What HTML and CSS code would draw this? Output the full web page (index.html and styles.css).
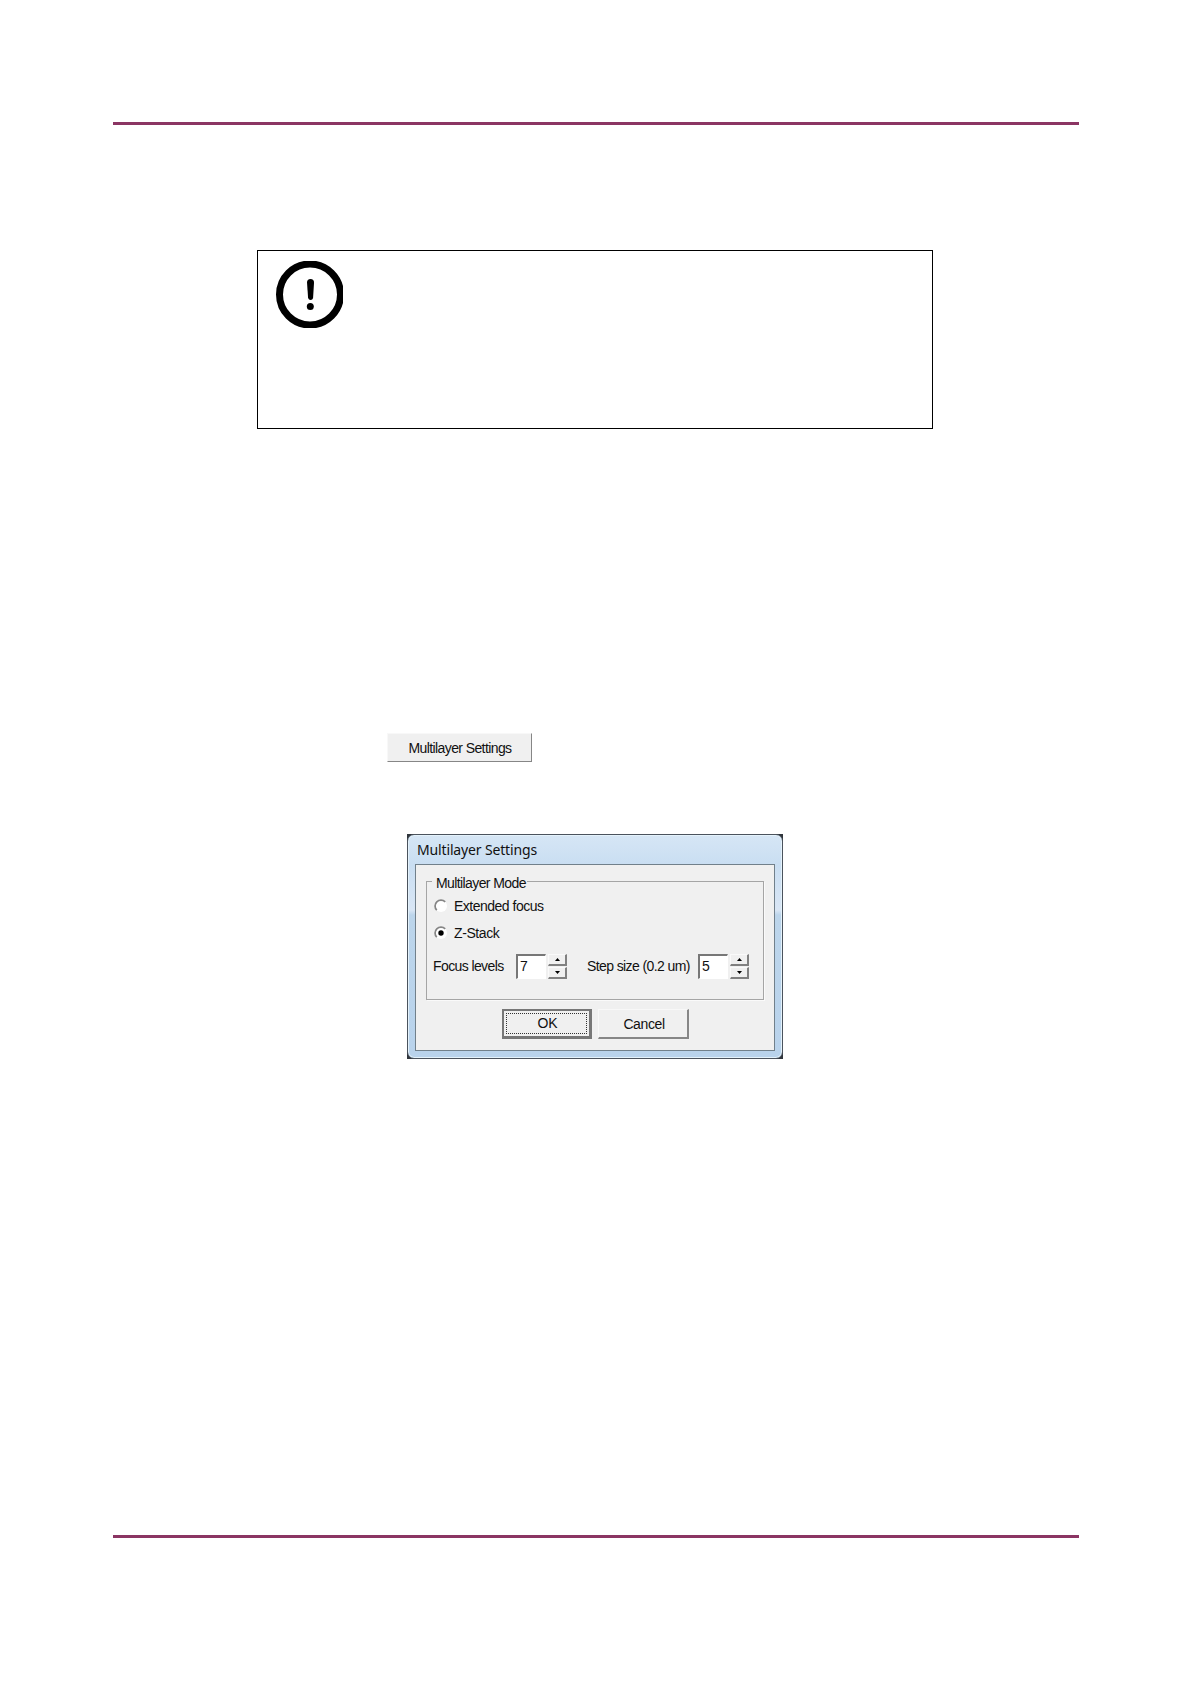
FILE: index.html
```html
<!DOCTYPE html>
<html lang="en">
<head>
  <meta charset="UTF-8" />
  <title>Multilayer Settings</title>
  <link rel="stylesheet" href="styles.css">
</head>
<body>
  <div class="page">
    <hr class="rule" />
    <div class="notice">
      <svg class="notice-icon" width="67" height="67" viewBox="0 0 67 67">
        <circle cx="34" cy="33.5" r="30.5" fill="none" stroke="#000" stroke-width="7" />
        <path d="M31 21.5a3.4 3.4 0 0 1 7 0L37.1 37a2.6 2.6 0 0 1-5 0z" />
        <circle cx="34.3" cy="45.5" r="3.5" />
      </svg>
    </div>

    <button type="button" class="btn btn-open"><span>Multilayer Settings</span></button>

    <div class="frame">
      <div class="dialog">
        <div class="titlebar"><span>Multilayer Settings</span></div>
        <div class="client">
          <div class="group">
            <div class="legend"><span>Multilayer Mode</span></div>
            <div class="option">
              <svg class="radio" width="14" height="14" viewBox="0 0 14 14">
                <circle cx="7" cy="7" r="6" fill="#fff" />
                <path d="M2.8 11.2A5.8 5.8 0 0 1 11.2 2.8" fill="none" stroke="#858585" stroke-width="1.7" />
              </svg>
              <span class="label-extended">Extended focus</span>
            </div>
            <div class="option">
              <svg class="radio" width="14" height="14" viewBox="0 0 14 14">
                <circle cx="7" cy="7" r="6" fill="#fff" />
                <path d="M2.8 11.2A5.8 5.8 0 0 1 11.2 2.8" fill="none" stroke="#858585" stroke-width="1.7" />
                <circle cx="7" cy="7" r="2.7" />
              </svg>
              <span class="label-stack">Z-Stack</span>
            </div>
            <div class="values">
              <span class="label-levels">Focus levels</span>
              <div class="field">7</div>
              <div class="spinner">
                <div class="spin"><svg width="5" height="3" viewBox="0 0 5 3"><path d="M0 3h5L2.5 0z" /></svg></div>
                <div class="spin"><svg width="5" height="3" viewBox="0 0 5 3"><path d="M0 0h5L2.5 3z" /></svg></div>
              </div>
              <span class="label-step">Step size (0.2 um)</span>
              <div class="field">5</div>
              <div class="spinner">
                <div class="spin"><svg width="5" height="3" viewBox="0 0 5 3"><path d="M0 3h5L2.5 0z" /></svg></div>
                <div class="spin"><svg width="5" height="3" viewBox="0 0 5 3"><path d="M0 0h5L2.5 3z" /></svg></div>
              </div>
            </div>
          </div>
          <div class="actions">
            <button type="button" class="btn btn-ok"><span>OK</span></button>
            <button type="button" class="btn btn-cancel"><span>Cancel</span></button>
          </div>
        </div>
      </div>
    </div>

    <hr class="rule rule-bottom" />
  </div>
</body>
</html>
```
FILE: styles.css
```css
* {
  box-sizing: border-box;
}
body {
  margin: 0;
  background: #fff;
  color: #111;
  font-family: "Liberation Sans", Arial, sans-serif;
  font-size: 14px;
}
.page {
  display: flex;
  flex-direction: column;
  height: 1684px;
  padding: 122px 111px 146px 113px;
}
.rule {
  width: 100%;
  height: 3px;
  margin: 0;
  border: none;
  background: #8b3563;
  flex: none;
}
.rule-bottom {
  margin-top: auto;
}
.notice {
  width: 676px;
  height: 179px;
  margin: 125px 0 0 144px;
  padding: 10px 18px;
  border: 1px solid #000;
}
.notice-icon {
  display: block;
}
.btn {
  padding: 0;
  border: 1px solid #f8f8f8;
  border-right: 2px solid #868686;
  border-bottom: 2px solid #868686;
  background: #f0f0f0;
  color: #111;
  font-family: inherit;
  font-size: 14px;
  line-height: 16px;
  white-space: nowrap;
}
.btn-open {
  width: 145px;
  height: 29px;
  margin: 304px 0 0 274px;
  padding-left: 1px;
  border-right: 1px solid #868686;
  border-bottom: 1px solid #868686;
  letter-spacing: -0.6px;
}
.frame {
  width: 376px;
  height: 225px;
  margin: 72px 0 0 294px;
  background: #30353c;
}
.dialog {
  height: 225px;
  padding: 0 7px 8px;
  border: 1px solid #4b535d;
  border-radius: 7px;
  background: linear-gradient(#d6e6f5, #c9def2 30px, #d9e6f5 75px, #bcd5eb 80px, #b9d3ec);
  box-shadow: inset 0 0 0 1px #e4f2fb;
}
.titlebar {
  height: 29px;
  padding: 6px 0 0 2px;
  font-family: "Noto Sans", sans-serif;
  font-size: 14px;
  line-height: 18px;
  letter-spacing: -0.15px;
}
.client {
  height: 187px;
  padding: 16px 10px 0 10px;
  border: 1px solid #71808b;
  background: #f0f0f0;
}
.group {
  height: 119px;
  padding-left: 5px;
  border: 1px solid #a5a5a5;
  box-shadow: 1px 1px #fafafa;
}
.legend {
  height: 17px;
  margin-top: -7px;
  line-height: 16px;
  letter-spacing: -0.6px;
}
.legend span {
  padding: 0 1px 0 4px;
  background: #f0f0f0;
}
.option {
  display: flex;
  align-items: center;
  height: 27px;
  padding-left: 2px;
}
.radio {
  margin-right: 6px;
}
.label-extended {
  letter-spacing: -0.5px;
}
.label-stack {
  letter-spacing: -0.4px;
}
.values {
  display: flex;
  align-items: center;
  height: 26px;
  margin-top: 7px;
  padding-left: 1px;
  white-space: nowrap;
}
.label-levels {
  width: 83px;
  letter-spacing: -0.6px;
}
.label-step {
  width: 111px;
  margin-left: 20px;
  letter-spacing: -0.6px;
}
.field {
  width: 30px;
  height: 25px;
  padding: 2px 0 0 2px;
  border: 2px solid #777;
  border-right: 1px solid #fff;
  border-bottom: 1px solid #fff;
  background: #fff;
  line-height: 17px;
}
.spinner {
  display: flex;
  flex-direction: column;
  gap: 1px;
  width: 19px;
  margin-left: 2px;
}
.spin {
  display: flex;
  align-items: center;
  justify-content: center;
  height: 12px;
  border: 1px solid #fafafa;
  border-right: 2px solid #808080;
  border-bottom: 2px solid #808080;
}
.actions {
  display: flex;
  gap: 6px;
  margin: 9px 0 0 76px;
}
.btn-ok {
  width: 90px;
  height: 30px;
  padding: 2px;
  border: 2px solid #777;
  border-right: 3px solid #777;
  border-bottom: 3px solid #777;
}
.btn-ok span {
  display: block;
  height: 21px;
  padding-left: 2px;
  border: 1px dotted #333;
  line-height: 19px;
}
.btn-cancel {
  width: 91px;
  height: 30px;
  padding-left: 2px;
  letter-spacing: -0.4px;
}
```
